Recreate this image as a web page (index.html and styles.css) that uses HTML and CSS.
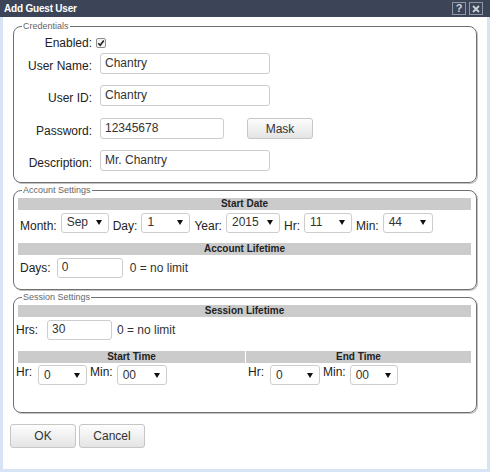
FILE: index.html
```html
<!DOCTYPE html>
<html lang="en">
<head>
<meta charset="utf-8">
<title>Add Guest User</title>
<link rel="stylesheet" href="styles.css">
</head>
<body>
<div class="dialog">
  <div class="titlebar">
    <span class="title">Add Guest User</span>
    <div class="tb-btns">
      <span class="tb-btn">?</span>
      <span class="tb-btn"><svg width="8" height="8" viewBox="0 0 8 8"><path d="M1 1L7 7M7 1L1 7" stroke="#cdd2d9" stroke-width="1.8"/></svg></span>
    </div>
  </div>
  <div class="content">
    <fieldset class="fs fs-cred">
      <legend>Credentials</legend>
      <div class="frow check"><label>Enabled:</label><span class="chk"><svg width="10" height="10" viewBox="0 0 10 10"><rect x="0.5" y="0.5" width="9" height="9" rx="1.5" fill="#f4f4f4" stroke="#8c8c8c"/><path d="M2.3 5.2L4.2 7.2L7.8 2.6" fill="none" stroke="#222" stroke-width="1.6"/></svg></span></div>
      <div class="frow"><label>User Name:</label><input class="inp w170" value="Chantry"></div>
      <div class="frow"><label>User ID:</label><input class="inp w170" value="Chantry"></div>
      <div class="frow pw"><label>Password:</label><input class="inp w124" value="12345678"><button class="btn mask">Mask</button></div>
      <div class="frow"><label>Description:</label><input class="inp w170" value="Mr. Chantry"></div>
    </fieldset>

    <fieldset class="fs fs-acct">
      <legend>Account Settings</legend>
      <div class="bar">Start Date</div>
      <div class="drow">
        <span class="lbl">Month:</span>
        <span class="sel w48"><span>Sep</span><svg class="arr" width="6" height="5" viewBox="0 0 6 5"><path d="M0 0H6L3 5Z"/></svg></span>
        <span class="lbl">Day:</span>
        <span class="sel w49"><span>1</span><svg class="arr" width="6" height="5" viewBox="0 0 6 5"><path d="M0 0H6L3 5Z"/></svg></span>
        <span class="lbl">Year:</span>
        <span class="sel w54"><span>2015</span><svg class="arr" width="6" height="5" viewBox="0 0 6 5"><path d="M0 0H6L3 5Z"/></svg></span>
        <span class="lbl">Hr:</span>
        <span class="sel w48"><span>11</span><svg class="arr" width="6" height="5" viewBox="0 0 6 5"><path d="M0 0H6L3 5Z"/></svg></span>
        <span class="lbl">Min:</span>
        <span class="sel w50"><span>44</span><svg class="arr" width="6" height="5" viewBox="0 0 6 5"><path d="M0 0H6L3 5Z"/></svg></span>
      </div>
      <div class="bar bar-gap">Account Lifetime</div>
      <div class="nrow days">
        <span class="lbl">Days:</span>
        <input class="inp w66" value="0">
        <span class="note">0 = no limit</span>
      </div>
    </fieldset>

    <fieldset class="fs fs-sess">
      <legend>Session Settings</legend>
      <div class="bar">Session Lifetime</div>
      <div class="nrow hrs">
        <span class="lbl">Hrs:</span>
        <input class="inp w65" value="30">
        <span class="note">0 = no limit</span>
      </div>
      <div class="tcols">
        <div class="tcol">
          <div class="bar">Start Time</div>
          <div class="trow start">
            <span class="lbl hr">Hr:</span>
            <span class="sel w49"><span>0</span><svg class="arr" width="6" height="5" viewBox="0 0 6 5"><path d="M0 0H6L3 5Z"/></svg></span>
            <span class="lbl mn">Min:</span>
            <span class="sel w50"><span>00</span><svg class="arr" width="6" height="5" viewBox="0 0 6 5"><path d="M0 0H6L3 5Z"/></svg></span>
          </div>
        </div>
        <div class="tcol">
          <div class="bar">End Time</div>
          <div class="trow end">
            <span class="lbl hr">Hr:</span>
            <span class="sel w50"><span>0</span><svg class="arr" width="6" height="5" viewBox="0 0 6 5"><path d="M0 0H6L3 5Z"/></svg></span>
            <span class="lbl mn">Min:</span>
            <span class="sel w48"><span>00</span><svg class="arr" width="6" height="5" viewBox="0 0 6 5"><path d="M0 0H6L3 5Z"/></svg></span>
          </div>
        </div>
      </div>
    </fieldset>

    <div class="actions">
      <button class="btn act">OK</button>
      <button class="btn act">Cancel</button>
    </div>
  </div>
</div>
</body>
</html>
```

FILE: styles.css
```css
* { box-sizing: border-box; }
html, body { margin: 0; padding: 0; }
body {
  width: 490px;
  height: 472px;
  overflow: hidden;
  font-family: "Liberation Sans", Arial, sans-serif;
  font-size: 12px;
  color: #222;
  background: #d6e4f5;
}
.dialog {
  width: 490px;
  height: 472px;
  display: flex;
  flex-direction: column;
  background: #d6e4f5;
}
.titlebar {
  flex: none;
  height: 17px;
  background: #3b4557;
  display: flex;
  align-items: center;
  justify-content: space-between;
  padding: 0 7px 0 4px;
}
.title {
  color: #fff;
  font-weight: bold;
  font-size: 10px;
  letter-spacing: -0.2px;
}
.tb-btns { display: flex; gap: 3px; }
.tb-btn {
  width: 14px;
  height: 13px;
  border: 1px solid #8e97a4;
  display: flex;
  align-items: center;
  justify-content: center;
  color: #cdd2d9;
  font-weight: bold;
  font-size: 11px;
  line-height: 1;
}
.content {
  flex: 1;
  background: #fff;
  margin: 0 3px 3px;
  display: flex;
  flex-direction: column;
}
.fs {
  margin: 2px 10px 0;
  padding: 0 5px 0 4px;
  border: 1px solid #707070;
  border-radius: 8px;
  box-shadow: 1px 1px 0 #c2c2c2;
  min-width: 0;
}
.fs legend {
  font-size: 9px;
  line-height: 10px;
  color: #666;
  padding: 0 1px;
  margin-left: 4px;
}
.fs-cred { margin-top: 4px; padding-bottom: 11px; }
.fs-acct { padding-bottom: 11px; }
.fs-sess { padding-bottom: 27px; }

.frow {
  display: flex;
  align-items: flex-end;
  height: 21px;
  margin-top: 11px;
}
.frow.check { height: 14px; margin-top: 5px; align-items: center; }
.frow.check + .frow { margin-top: 3px; }
.frow.pw { margin-top: 12px; }
.frow label {
  flex: none;
  width: 74px;
  margin-right: 8px;
  text-align: right;
  line-height: 16px;
}
.chk { display: flex; margin-left: -4px; }
.chk svg { display: block; }

.inp {
  flex: none;
  height: 21px;
  border: 1px solid #cdcdcd;
  border-radius: 3px;
  padding: 0 4px 2px;
  font: 12px "Liberation Sans", Arial, sans-serif;
  color: #333;
  background: #fff;
  outline: none;
  margin: 0;
}
.w170 { width: 170px; }
.w124 { width: 124px; }
.w66 { width: 66px; }
.w65 { width: 65px; }
.w48 { width: 48px; }
.w49 { width: 49px; }
.w50 { width: 50px; }
.w54 { width: 54px; }

.btn {
  border: 1px solid #c6c6c6;
  border-radius: 3px;
  background: linear-gradient(#fdfdfd, #e4e4e4);
  font: 12px "Liberation Sans", Arial, sans-serif;
  color: #333;
  padding: 0;
  margin: 0;
}
.mask { width: 66px; height: 21px; margin-left: 23px; }

.bar {
  height: 12px;
  margin-top: 3px;
  background: #cbcbcb;
  font-weight: bold;
  font-size: 10px;
  line-height: 12px;
  text-align: center;
  color: #222;
}
.bar-gap { margin-top: 10px; }

.lbl { flex: none; line-height: 14px; }
.note { color: #333; }

.sel {
  flex: none;
  height: 20px;
  display: flex;
  align-items: center;
  justify-content: space-between;
  border: 1px solid #cdcdcd;
  border-radius: 3px;
  padding: 0 6px 0 5px;
  background: #fff;
  color: #333;
}
.arr { display: block; fill: #111; }

.drow {
  display: flex;
  align-items: flex-end;
  gap: 4px;
  height: 20px;
  margin-top: 3px;
  padding-left: 2px;
}
.drow .sel { align-items: flex-start; padding-top: 1px; }
.drow .arr { margin-top: 5px; }

.nrow {
  display: flex;
  align-items: center;
  height: 20px;
  margin-top: 3px;
}
.nrow .inp { height: 20px; }
.days { padding-left: 2px; }
.days .lbl { margin-right: 6px; }
.days .note { margin-left: 7px; }
.hrs { margin-left: -2px; }
.hrs .lbl { margin-right: 9px; }
.hrs .note { margin-left: 5px; }

.tcols {
  display: grid;
  grid-template-columns: 227px 1fr;
  column-gap: 1px;
  margin-top: 8px;
}
.trow {
  display: flex;
  align-items: flex-start;
  height: 20px;
  margin-top: 2px;
}
.trow.start { margin-left: -2px; }
.trow.end { padding-left: 2px; }
.trow .hr { margin-right: 6px; }
.trow .mn { margin: 0 4px 0 3px; }

.actions {
  display: flex;
  gap: 3px;
  margin: 11px 0 0 7px;
}
.act { width: 66px; height: 24px; }
```
